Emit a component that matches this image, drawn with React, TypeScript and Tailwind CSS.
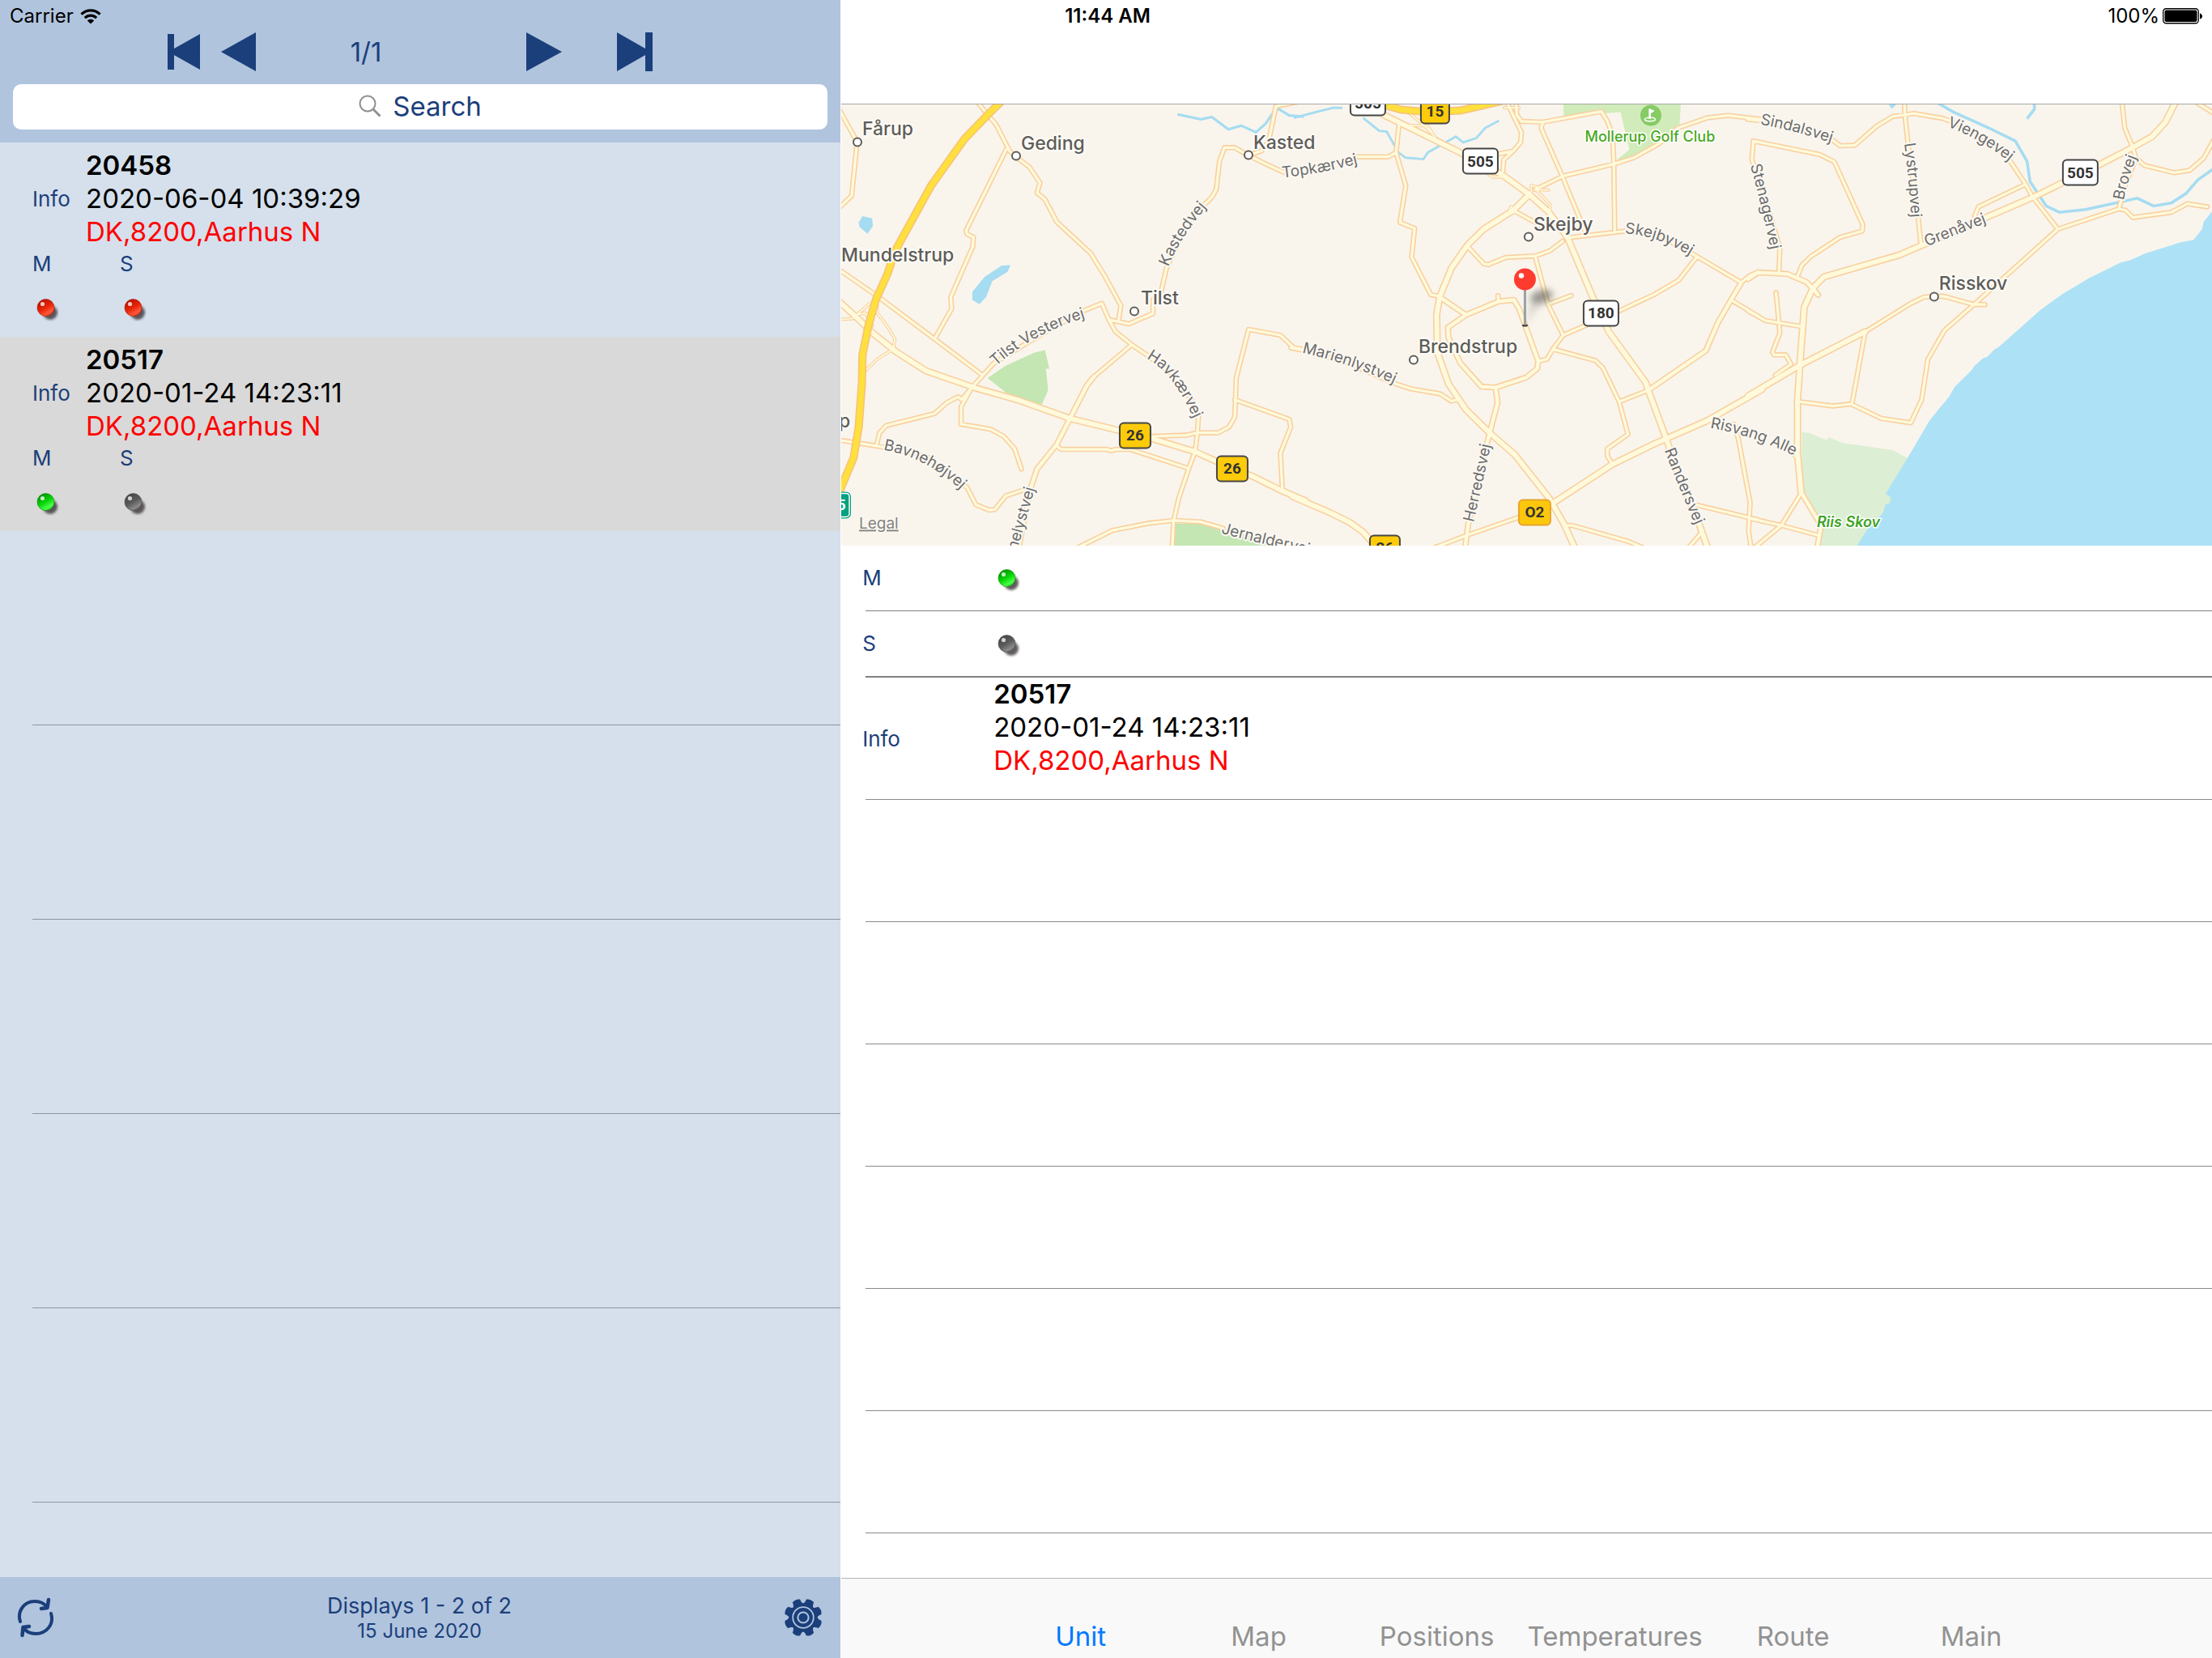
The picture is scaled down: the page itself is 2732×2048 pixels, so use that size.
type Tone = "red" | "green" | "gray";

interface Unit {
  id: string;
  time: string;
  place: string;
  m: Tone;
  s: Tone;
  selected: boolean;
}

const units: Unit[] = [
  { id: "20458", time: "2020-06-04 10:39:29", place: "DK,8200,Aarhus N", m: "red", s: "red", selected: false },
  { id: "20517", time: "2020-01-24 14:23:11", place: "DK,8200,Aarhus N", m: "green", s: "gray", selected: true }
];

const tabs = ["Unit", "Map", "Positions", "Temperatures", "Route", "Main"];

const toneStops: Record<Tone, [string, string, string]> = {
  red: ["#b01000", "#e82408", "#ff5a3c"],
  green: ["#008a00", "#08d808", "#4cff4c"],
  gray: ["#444444", "#5c5c5c", "#8a8a8a"]
};

function Led({ tone }: { tone: Tone }) {
  const [dark, mid, light] = toneStops[tone];

  return (
    <svg viewBox="0 0 28 28" className="size-7 shrink-0" role="img" aria-label={tone}>
      <defs>
        <linearGradient id={`led-${tone}`} x1="0.2" y1="0" x2="0.8" y2="1">
          <stop offset="0" stopColor={dark} />
          <stop offset="0.5" stopColor={mid} />
          <stop offset="0.8" stopColor={light} />
          <stop offset="1" stopColor={mid} />
        </linearGradient>
        <filter id={`led-blur-${tone}`} x="-30%" y="-30%" width="160%" height="160%">
          <feGaussianBlur stdDeviation="1.4" />
        </filter>
      </defs>
      <ellipse cx="17" cy="17" rx="9" ry="9" fill="#3a3638" opacity="0.8" filter={`url(#led-blur-${tone})`} />
      <circle cx="11.500" cy="11" r="10.5" fill={`url(#led-${tone})`} stroke={dark} strokeOpacity="0.6" />
      <circle cx="7.5" cy="6.5" r="2.6" fill="#fff" opacity="0.75" />
    </svg>
  );
}

function StatusBar() {
  return (
    <div className="absolute inset-x-0 top-0 grid h-10 grid-cols-3 items-center px-3 text-2xl leading-10 text-black">
      <div className="flex items-center gap-2">
        <span>Carrier</span>
        <svg viewBox="0 0 26 19" className="h-[19px] w-[26px]" fill="none" stroke="#000" strokeWidth="3.2">
          <path d="M1.5 6.6C8 0.2 18 0.2 24.500 6.600" />
          <path d="M5.800 11.200C10 7.200 16 7.200 20.200 11.200" />
          <path d="M13 18.600L8.800 14.400C11 12.200 15 12.200 17.200 14.400Z" fill="#000" stroke="none" />
        </svg>
      </div>
      <span className="pl-1 text-center font-semibold">11:44 AM</span>
      <div className="flex items-center justify-end gap-1">
        <span>100%</span>
        <svg viewBox="0 0 49 20" className="h-5 w-[49px]">
          <rect x="0.750" y="0.750" width="43.500" height="18" rx="3.500" fill="none" stroke="#000" strokeWidth="1.300" />
          <rect x="2.500" y="2.500" width="40" height="14.500" rx="2" fill="#000" />
          <path d="M46 6.500C48 7 49 8.500 49 10S48 13 46 13.500Z" fill="#000" />
        </svg>
      </div>
    </div>
  );
}

function Pager() {
  return (
    <div className="flex h-12 items-center pl-[207px] text-[#1b3f7a]">
      <button type="button" aria-label="First page">
        <svg viewBox="0 0 40 44" className="h-11 w-10" fill="currentColor">
          <path d="M0 0H8V18L40 0V44L8 26V44H0Z" />
        </svg>
      </button>
      <button type="button" aria-label="Previous page" className="ml-[26px]">
        <svg viewBox="0 0 43 48" className="h-12 w-[43px]" fill="currentColor">
          <path d="M43 0V48L0 24Z" />
        </svg>
      </button>
      <span className="w-[272px] text-center text-[33px] leading-10">1/1</span>
      <button type="button" aria-label="Next page" className="ml-[62px]">
        <svg viewBox="0 0 44 48" className="h-12 w-11" fill="currentColor">
          <path d="M0 0V48L44 24Z" />
        </svg>
      </button>
      <button type="button" aria-label="Last page" className="ml-[68px]">
        <svg viewBox="0 0 44 48" className="h-12 w-11" fill="currentColor">
          <path d="M44 0H35V20L0 0V48L35 28V48H44Z" />
        </svg>
      </button>
    </div>
  );
}

function UnitRow({ unit }: { unit: Unit }) {
  return (
    <li className={unit.selected ? "h-60 bg-[#d9d9d9] pt-2 pl-10" : "h-60 bg-[#d5e0ec] pt-2 pl-10"}>
      <div className="flex items-center">
        <span className="w-[66px] text-[26px] text-[#1b3f7a]">Info</span>
        <div className="text-[33px] leading-[41px]">
          <p className="font-semibold">{unit.id}</p>
          <p>{unit.time}</p>
          <p className="text-[#ff0000]">{unit.place}</p>
        </div>
      </div>
      <dl className="flex text-[26px] leading-[38px] text-[#1b3f7a]">
        <div className="w-27">
          <dt>M</dt>
          <dd className="mt-6 ml-[5px]">
            <Led tone={unit.m} />
          </dd>
        </div>
        <div className="w-27">
          <dt>S</dt>
          <dd className="mt-6 ml-[5px]">
            <Led tone={unit.s} />
          </dd>
        </div>
      </dl>
    </li>
  );
}

const teeth = [0, 45, 90, 135, 180, 225, 270, 315];

function Sidebar() {
  return (
    <aside className="flex w-[38%] shrink-0 flex-col bg-[#d5e0ec]">
      <header className="bg-[#b0c4de] px-4 pt-10 pb-4">
        <div className="-mx-4">
          <Pager />
        </div>
        <label className="mt-4 flex h-14 items-center justify-center gap-3.5 rounded-[10px] bg-white pb-0.5">
          <svg viewBox="0 0 28 28" className="size-7" fill="none" stroke="#8e8e93" strokeWidth="2">
            <circle cx="11" cy="11" r="9.500" />
            <path d="M17.500 17.500L26.500 26.500" strokeWidth="2.800" />
          </svg>
          <input
            type="search"
            aria-label="Search"
            placeholder="Search"
            className="field-sizing-content text-[33px] leading-10 outline-none placeholder:text-[#1b3f7a]"
          />
        </label>
      </header>

      <ul className="min-h-0 flex-1 overflow-hidden">
        {units.map((unit) => (
          <UnitRow key={unit.id} unit={unit} />
        ))}
        {[0, 1, 2, 3, 4].map((row) => (
          <li key={row} className="ml-10 h-60 border-b border-[#8f959d]" />
        ))}
      </ul>

      <footer className="flex h-[100px] shrink-0 items-center justify-between bg-[#b0c4de] pr-[22px] pl-5 text-[#1b3f7a]">
        <button type="button" aria-label="Refresh">
          <svg viewBox="0 0 48 50" className="h-[50px] w-12" fill="none" stroke="currentColor" strokeWidth="4" strokeLinecap="round" strokeLinejoin="round">
            <path d="M5 30C1 18 9 5 23 5C30 5 35 8 38 12" />
            <path d="M40 3L38.500 13L31 14" strokeWidth="4.500" />
            <path d="M43 20C47 33 38 45 24 45C18 45 12 42 9 38" />
            <path d="M7.500 47L8.500 37L16 36" strokeWidth="4.500" />
          </svg>
        </button>
        <div className="pt-0.5 text-center">
          <p className="text-[27px] leading-8">Displays 1 - 2 of 2</p>
          <p className="text-2xl leading-[30px]">15 June 2020</p>
        </div>
        <button type="button" aria-label="Settings">
          <svg viewBox="-24 -24 48 48" className="size-12">
            <g fill="currentColor">
              <circle r="17.500" />
              {teeth.map((angle) => (
                <path key={angle} d="M-7.500 -15Q-4.800 -17.500 -5 -22.300Q0 -25 5 -22.300Q4.800 -17.500 7.500 -15Z" transform={`rotate(${angle + 22.5})`} />
              ))}
            </g>
            <circle r="12.800" fill="none" stroke="#b0c4de" strokeWidth="1.800" />
            <circle r="6.600" fill="none" stroke="#b0c4de" strokeWidth="2" />
          </svg>
        </button>
      </footer>
    </aside>
  );
}

// The map is stored as three tiles side by side, each in its own grid units.
interface Tile {
  x: number;
  minor: string[];
  medium: string[];
  major: string[];
  highway: string[];
  thin: string[];
}

const tiles: Tile[] = [
  {
    x: -1,
    thin: [
      "M-5 768L40 765L100 712",
      "M125 715V745L165 800L185 835L180 870L125 905L85 945",
      "M60 750L85 745L110 790"
    ],
    minor: [
      "M-5 40L57 154L38 340L-5 382",
      "M465 15L530 95L575 185L596 205L642 240L678 295L668 330L695 352L735 430L850 538L900 620L953 720L945 770",
      "M563 180L427 460L430 472L452 483L450 515L375 690L378 730L320 835",
      "M-5 595L120 683L320 835L482 960",
      "M412 1045L445 1005L520 920L640 845L820 740L888 712L912 768L980 783L1062 747V700L1090 670L1108 590L1180 430L1235 372L1262 345L1277 318L1288 220L1305 173H1340L1386 200L1450 232L1510 260",
      "M912 768L935 810L990 855L1045 893L1130 960L1190 1040L1217 1100L1213 1160L1205 1225L1185 1280L1150 1385L1132 1465L1127 1570",
      "M990 855L862 965L838 995L780 1110",
      "M645 1355L605 1570",
      "M445 1005L410 1070V1130L510 1147L555 1172L592 1215L615 1285",
      "M412 1045L400 1035L362 1055L320 1093L155 1135L133 1160L122 1205",
      "M-5 1185L60 1195L122 1205L150 1210L290 1240L400 1330L430 1348L460 1408L505 1427L525 1425L562 1378L630 1355",
      "M735 1205L750 1217H905L920 1222L935 1217H985L1180 1282",
      "M1060 1172L1175 1168L1210 1160H1282L1320 1140L1340 1105L1345 970L1387 802L1495 822L1540 865L1580 872",
      "M1340 1045L1525 1113L1530 1140L1495 1230L1502 1360",
      "M800 1560L925 1497L1045 1473L1132 1463L1225 1468L1300 1490",
      "M1386 200L1430 185L1455 150L1480 30L1560 14"
    ],
    medium: ["M780 1110L735 1200L668 1285L645 1355", "M780 1110L838 995L862 965"],
    major: [
      "M-5 705L65 770L110 815L190 880L290 945L460 1005L600 1045L780 1110L980 1160L1060 1180L1205 1225L1270 1255L1400 1310L1500 1360L1580 1395"
    ],
    highway: ["M560 0L500 60L420 145L308 305L186 530L160 610L120 700L95 790L75 890L73 990L62 1140L45 1245L0 1355"]
  },
  {
    x: 561,
    thin: [
      "M352 95L450 98L475 140",
      "M370 40L430 90L470 130",
      "M860 320L818 318L865 370V395",
      "M650 260L670 275H705",
      "M800 330L802 303L825 312",
      "M732 378L728 390L740 400L752 388Z",
      "M710 35H760"
    ],
    minor: [
      "M352 95L342 190L375 305L355 432L405 452L395 552L460 682L490 688L580 752",
      "M205 205H315L342 190",
      "M-15 866L30 875L180 920L340 990L390 1007L492 1025L530 1050L550 1045",
      "M720 20L768 120L765 155L740 185L690 195",
      "M740 185L708 215L705 255",
      "M750 15L752 60L768 82L840 85L1040 48L1060 82L1078 130L1082 230L1085 465",
      "M840 88L835 105L908 275L985 465",
      "M815 318L908 272L1082 230L1150 208L1235 160L1300 105L1400 70L1470 62L1580 75",
      "M740 390L815 432L850 455",
      "M925 485L1120 462L1240 480L1340 535L1365 550L1515 640L1545 615L1575 603",
      "M1480 700L1575 758",
      "M1365 550L1302 632L1218 682L1100 738L910 822L875 870L855 905L825 912",
      "M585 515L640 575L655 578L715 553L815 548L865 530L908 497",
      "M815 550L858 715L910 822",
      "M858 715L937 685",
      "M690 705L688 685",
      "M1200 1012L1100 1052",
      "M875 870L1020 910L1045 935L1100 1052L1130 1165L1060 1215V1240L1075 1265",
      "M465 1560L588 1512L765 1450",
      "M915 1480H940L1130 1535L1200 1565",
      "M1365 1410L1570 1460",
      "M1490 1130L1505 1180L1545 1400L1540 1500L1550 1570",
      "M1325 1570L1380 1505"
    ],
    medium: [
      "M580 752L690 705L742 700L760 730L825 912L822 937L785 968L680 1003L632 1000L560 918L520 830L518 795Z",
      "M1515 640L1480 700L1435 780L1395 875L1200 1012",
      "M680 1003L687 1055L650 1200L588 1470L575 1570",
      "M490 690L580 752"
    ],
    major: [
      "M300 60L400 110L560 190L640 235L700 265L795 335L860 395L925 485L1010 690L1065 810L1190 985L1200 1015L1260 1180L1300 1300L1370 1470L1405 1570",
      "M795 335L740 390L640 455L585 510L530 590L490 690L480 750L482 880L520 990L580 1080L660 1160L745 1235L865 1390L915 1480L955 1570",
      "M865 1410L1075 1270L1215 1200L1260 1180L1395 1120L1585 1010",
      "M-10 1380L120 1437L185 1470L230 1503L262 1540"
    ],
    highway: ["M290 22L360 42L450 50L560 45L700 12"]
  },
  {
    x: 1123,
    thin: ["M135 1230L165 1252"],
    minor: [
      "M-10 75L35 80L160 105L270 140L305 167L355 165L430 98L485 65L525 60L555 55L655 72L700 90L800 140L870 200L935 300L960 345L1045 455",
      "M523 10L525 60L535 155L570 415L580 512",
      "M935 300L775 378L762 410",
      "M1045 455L1252 385L1275 390L1300 415L1430 397L1485 367L1552 378",
      "M1262 10L1272 105L1300 175L1310 210L1340 235L1440 260L1492 252L1540 210L1575 145",
      "M1310 210L1275 300L1252 385",
      "M1505 10L1575 55",
      "M1045 455L760 716L660 805L603 905L582 1045L545 1125L445 1110L342 1060L280 1067L165 1052",
      "M390 810L345 1060",
      "M100 520L60 380L5 215L10 150L235 197L285 222L382 440L380 462L305 483L205 550L175 580L160 618",
      "M100 520L97 605",
      "M87 675L97 780L100 815L75 880L80 890H120L138 922L85 960",
      "M-8 738L52 772L175 792",
      "M172 1370L105 1480L10 1560",
      "M-5 1455L105 1480L232 1515",
      "M390 810L545 712L590 690L655 687L760 716H797"
    ],
    medium: ["M-8 628L25 605L125 610L190 638L212 660L230 682", "M225 1570L240 1480L172 1365"],
    major: [
      "M-8 1032L170 925L390 810",
      "M1450 5L1410 85L1365 135L1300 172L1180 235L960 345L800 415L580 512L505 545L250 620L212 660L183 725L168 925L160 1050V1230L172 1365"
    ],
    highway: []
  }
];

const layers = [
  { key: "thin", casing: 11, fill: 5 },
  { key: "minor", casing: 18, fill: 9 },
  { key: "medium", casing: 21, fill: 12 },
  { key: "major", casing: 25, fill: 16 }
] as const;

const places = [
  { name: "Fårup", x: 26, y: 38, dotX: 20, dotY: 47 },
  { name: "Geding", x: 222, y: 56, dotX: 216, dotY: 64 },
  { name: "Kasted", x: 509, y: 55, dotX: 503, dotY: 63 },
  { name: "Tilst", x: 370, y: 248, dotX: 362, dotY: 256 },
  { name: "Skejby", x: 855, y: 156, dotX: 849, dotY: 164 },
  { name: "Brendstrup", x: 713, y: 308, dotX: 707, dotY: 316 },
  { name: "Risskov", x: 1356, y: 230, dotX: 1350, dotY: 238 }
];

const streets = [
  { id: "topkaervej", name: "Topkærvej", d: "M545 91Q593 86 645 72" },
  { id: "kastedvej", name: "Kastedvej", d: "M404 201Q418 165 454 124" },
  { id: "tilst", name: "Tilst Vestervej", d: "M191 324Q235 284 304 263" },
  { id: "havkaervej", name: "Havkærvej", d: "M377 314Q413 333 440 400" },
  { id: "bavnehojvej", name: "Bavnehøjvej", d: "M52 427Q108 437 152 481" },
  { id: "anelystvej", name: "nelystvej", d: "M217 552Q228 515 241 468" },
  { id: "jernaldervej", name: "Jernaldervej", d: "M469 530Q518 543 590 559" },
  { id: "marienlystvej", name: "Marienlystvej", d: "M569 307Q628 320 690 349" },
  { id: "skejbyvej", name: "Skejbyvej", d: "M968 160Q1010 162 1056 192" },
  { id: "herredsvej", name: "Herredsvej", d: "M781 517Q792 470 804 413" },
  { id: "randersvej", name: "Randersvej", d: "M1017 428Q1035 475 1060 532" },
  { id: "stenagervej", name: "Stenagervej", d: "M1123 76Q1137 125 1150 190" },
  { id: "sindalsvej", name: "Sindalsvej", d: "M1135 25Q1180 33 1236 52" },
  { id: "lystrupvej", name: "Lystrupvej", d: "M1313 49Q1319 92 1322 150" },
  { id: "viengevej", name: "Viengevej", d: "M1366 28Q1403 40 1445 73" },
  { id: "grenavej", name: "Grenåvej", d: "M1341 176Q1375 162 1424 143" },
  { id: "brovej", name: "Brovej", d: "M1584 119Q1589 92 1605 53" },
  { id: "risvang", name: "Risvang Alle", d: "M1073 400Q1130 410 1182 437" }
];

const shields = [
  { label: "26", x: 343, y: 393, w: 40, kind: "yellow" },
  { label: "26", x: 463, y: 434, w: 40, kind: "yellow" },
  { label: "505", x: 628, y: -18, w: 45, kind: "white" },
  { label: "15", x: 715, y: -8, w: 37, kind: "yellow" },
  { label: "505", x: 767, y: 54, w: 45, kind: "white" },
  { label: "180", x: 916, y: 242, w: 45, kind: "white" },
  { label: "O2", x: 836, y: 488, w: 41, kind: "amber" },
  { label: "26", x: 652, y: 532, w: 39, kind: "yellow" },
  { label: "505", x: 1508, y: 68, w: 45, kind: "white" },
  { label: "E45", x: -33, y: 479, w: 45, kind: "green" }
];

const shieldColors: Record<string, { fill: string; stroke: string; text: string }> = {
  yellow: { fill: "#fdcb0a", stroke: "#454545", text: "#333" },
  amber: { fill: "#fdc70c", stroke: "#e6a52c", text: "#333" },
  white: { fill: "#fff", stroke: "#454545", text: "#333" },
  green: { fill: "#00a181", stroke: "#00a181", text: "#fff" }
};

function tileTransform(tile: Tile): string {
  return `translate(${tile.x} -8) scale(0.3635 0.3571)`;
}

function MapView() {
  return (
    <svg viewBox="0 0 1693 546" preserveAspectRatio="xMidYMid slice" className="h-[545px] w-full shrink-0 bg-[#f9f5ed]">
      <defs>
        <filter id="pin-shadow" x="-50%" y="-50%" width="200%" height="200%">
          <feGaussianBlur stdDeviation="4" />
        </filter>
        {streets.map((street) => (
          <path key={street.id} id={street.id} d={street.d} />
        ))}
      </defs>

      <g transform={tileTransform(tiles[0])}>
        <path fill="#c3e6b2" d="M500 970L560 928L660 882L695 874L710 938H698L706 1012L683 1065L580 1035Z" />
        <path fill="#c3e6b2" d="M1135 1473L1225 1475L1300 1490L1420 1525L1480 1570H1130Z" />
        <g fill="#a6dcf1">
          <path d="M62 432L75 410L108 418L110 445L92 471L65 448Z" />
          <path d="M548 581L578 580L568 603L516 635L495 690L472 715L448 700V672L490 620Z" />
        </g>
        <path fill="none" stroke="#a6dcf1" strokeWidth="9" d="M1145 58L1225 75L1262 67L1318 110L1362 97L1412 120L1445 90L1475 45L1490 40L1525 62L1575 66" />
      </g>
      <g transform={tileTransform(tiles[1])}>
        <path fill="#d1ecba" d="M910 15H1310L1305 100L1240 145L1150 205L1090 218L1135 180L1105 50L912 65Z" />
        <g fill="none" stroke="#a6dcf1" strokeWidth="8">
          <path d="M-5 70L70 50L130 35L160 36" />
          <path d="M230 70L285 115L310 118L350 190L375 208L435 213L450 190L545 135L570 155L615 140L645 105L692 80" />
        </g>
      </g>
      <g transform={tileTransform(tiles[2])}>
        <path fill="#dceed3" d="M175 1158L200 1160L260 1185L265 1175L315 1195L485 1220L533 1247L480 1400L400 1570H230L240 1480L175 1350Z" />
        <path fill="#ade1f6" d="M1580 380L1540 430L1535 455L1505 493L1465 500L1340 540L1290 563L1260 570L1150 625L1060 680L985 735L900 812L845 862L828 872L805 897L790 902L760 930L752 943L695 1000L675 1035L610 1115L535 1245L460 1370L478 1385L472 1405L458 1408L452 1435L400 1490L350 1570H1580Z" />
        <path fill="#a6dcf1" d="M465 15H505L480 39Z" />
        <g fill="none" stroke="#a6dcf1" strokeWidth="10">
          <path d="M630 15L690 50L810 105L900 150L940 220L950 290L1005 375L1050 397L1140 387L1315 348L1370 375L1430 365L1480 332L1520 285L1575 245" />
          <path d="M965 15V40L940 73" />
        </g>
      </g>

      <g fill="none" strokeLinejoin="round" strokeLinecap="round">
        {tiles.map((tile) => (
          <g key={tile.x} transform={tileTransform(tile)} stroke="#f9d0a0">
            {layers.map((layer) => (
              <path key={layer.key} d={tile[layer.key].join("")} strokeWidth={layer.casing} />
            ))}
          </g>
        ))}
        {tiles.map((tile) => (
          <g key={tile.x} transform={tileTransform(tile)} stroke="#fefadb">
            {layers.map((layer) => (
              <path key={layer.key} d={tile[layer.key].join("")} strokeWidth={layer.fill} />
            ))}
          </g>
        ))}
        {tiles.map((tile) => (
          <g key={tile.x} transform={tileTransform(tile)}>
            <path d={tile.highway.join("")} stroke="#f8c27c" strokeWidth="28" />
            <path d={tile.highway.join("")} stroke="#ffe03c" strokeWidth="19" />
          </g>
        ))}
      </g>

      <g fontSize="19" fill="#6c6c6c" stroke="#fbf8f2" strokeWidth="4" paintOrder="stroke" strokeLinejoin="round">
        {streets.map((street) => (
          <text key={street.id}>
            <textPath href={`#${street.id}`}>{street.name}</textPath>
          </text>
        ))}
      </g>

      {places.map((place) => (
        <circle key={place.name} cx={place.dotX} cy={place.dotY} r="5" fill="#fff" stroke="#5e5d58" strokeWidth="2" />
      ))}
      <g fontSize="23" fontWeight="500" fill="#5e5d58" stroke="#fdfbf7" strokeWidth="4" paintOrder="stroke" strokeLinejoin="round">
        {places.map((place) => (
          <text key={place.name} x={place.x} y={place.y}>
            {place.name}
          </text>
        ))}
        <text x="0" y="195">Mundelstrup</text>
        <text x="-3" y="400">p</text>
      </g>

      <g fontSize="18" fontWeight="500" stroke="#fff" strokeWidth="3" paintOrder="stroke" strokeLinejoin="round">
        <text x="999" y="46" textAnchor="middle" fill="#4aa81e">Mollerup Golf Club</text>
        <text x="1205" y="523" fill="#3fa325" fontStyle="italic" fontWeight="600">Riis Skov</text>
      </g>
      <circle cx="1000" cy="14" r="13" fill="#86cb65" />
      <path d="M998 18V6L1004 8.500L999.500 11.500V18Z" fill="#fff" stroke="#fff" />
      <ellipse cx="999" cy="19" rx="6.500" ry="2.200" fill="none" stroke="#fff" strokeWidth="1.500" />

      {shields.map((shield) => {
        const colors = shieldColors[shield.kind];

        return (
          <g key={`${shield.x}-${shield.y}`}>
            <rect x={shield.x + 1} y={shield.y + 1} width={shield.w - 2} height="31" rx="5" fill={colors.fill} stroke={colors.stroke} strokeWidth="2" />
            {shield.kind === "green" && (
              <rect x={shield.x + 2} y={shield.y + 2} width={shield.w - 4} height="29" rx="4" fill="none" stroke="#fff" strokeWidth="1.500" />
            )}
            <text x={shield.x + shield.w / 2} y={shield.y + 23} textAnchor="middle" fontFamily="Roboto, sans-serif" fontSize="19" fontWeight="700" fill={colors.text}>
              {shield.label}
            </text>
          </g>
        );
      })}

      <path d="M845 272L853 244L864 246Z" fill="#6b6b66" opacity="0.250" filter="url(#pin-shadow)" />
      <ellipse cx="865" cy="238" rx="14" ry="8" fill="#55554f" opacity="0.600" transform="rotate(-15 865 238)" filter="url(#pin-shadow)" />
      <ellipse cx="844.500" cy="273.500" rx="3.500" ry="1.500" fill="#3c3c3c" />
      <path d="M844.500 228V273" stroke="#9aa0a6" strokeWidth="3" />
      <circle cx="844.500" cy="216.500" r="13.500" fill="#ff3b30" />
      <circle cx="840" cy="212" r="3.200" fill="#fff" />

      <a href="#legal">
        <text x="22" y="525" fontSize="19" fill="#84827c" textDecoration="underline" stroke="#fdfbf7" strokeWidth="2" paintOrder="stroke">
          Legal
        </text>
      </a>
    </svg>
  );
}

function Detail({ unit }: { unit: Unit }) {
  return (
    <main className="flex min-w-0 flex-1 flex-col bg-white pl-px">
      <header className="h-[129px] shrink-0 border-b border-[#a7a7a7]" />
      <MapView />

      <dl className="min-h-0 flex-1 overflow-hidden">
        <div className="flex h-20 items-center pl-[26px]">
          <dt className="w-[162px] pb-0.5 text-[26px] text-[#1b3f7a]">M</dt>
          <dd className="pt-1.5 pl-[5px]">
            <Led tone={unit.m} />
          </dd>
        </div>
        <div className="ml-[30px] h-px bg-[#808080]" />
        <div className="flex h-20 items-center pl-[26px]">
          <dt className="w-[162px] pb-0.5 text-[26px] text-[#1b3f7a]">S</dt>
          <dd className="pt-1.5 pl-[5px]">
            <Led tone={unit.s} />
          </dd>
        </div>
        <div className="ml-[30px] h-0.5 bg-[#808080]" />
        <div className="flex h-[150px] items-center pl-[26px]">
          <dt className="w-[162px] text-[26px] text-[#1b3f7a]">Info</dt>
          <dd className="h-full text-[33px] leading-[41px]">
            <p className="font-semibold">{unit.id}</p>
            <p>{unit.time}</p>
            <p className="text-[#ff0000]">{unit.place}</p>
          </dd>
        </div>
        {[0, 1, 2, 3, 4, 5, 6].map((row) => (
          <div key={row} className="ml-[30px] h-[151px] border-t border-[#8a8a8a]" />
        ))}
      </dl>

      <nav className="flex h-[99px] shrink-0 items-end justify-center border-t border-[#b2b2b2] bg-[#f9f9f9] pr-0.5 pb-[7px]">
        {tabs.map((tab) => (
          <button
            key={tab}
            type="button"
            className={
              tab === "Unit"
                ? "w-[220px] text-center text-[33px] leading-10 text-[#007aff]"
                : "w-[220px] text-center text-[33px] leading-10 text-[#929292]"
            }
          >
            {tab}
          </button>
        ))}
      </nav>
    </main>
  );
}

export default function App() {
  return (
    <div className="relative flex h-screen overflow-hidden font-['Inter',sans-serif] text-black">
      <Sidebar />
      <Detail unit={units[1]} />
      <StatusBar />
    </div>
  );
}
